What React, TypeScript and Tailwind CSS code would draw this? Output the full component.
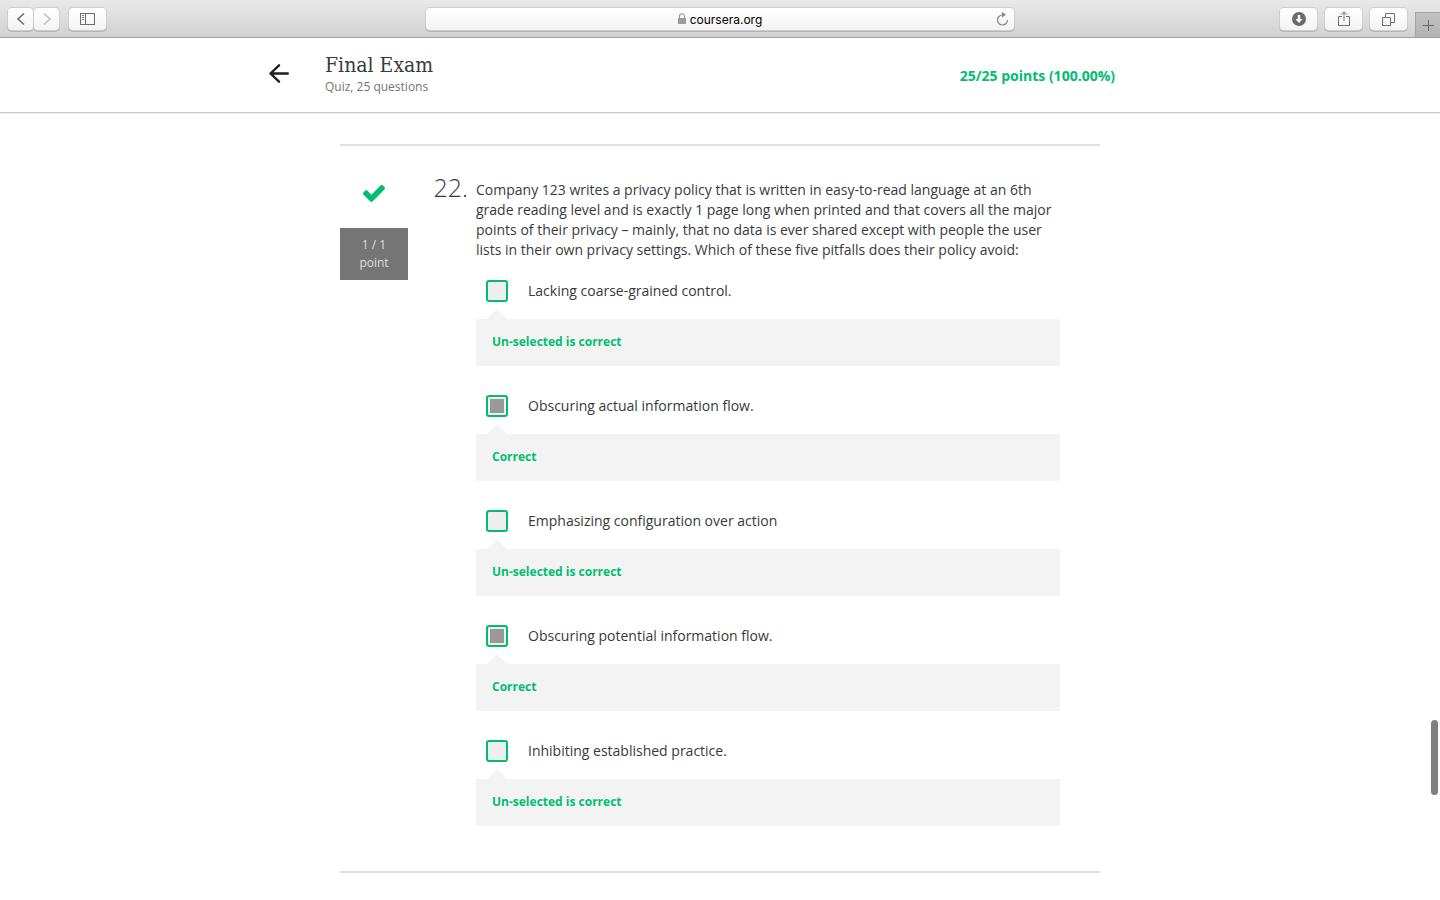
import React from "react";

type Option = { id: string; text: string; selected: boolean };

const OPTIONS: Option[] = [
  { id: "coarse", text: "Lacking coarse-grained control.", selected: false },
  { id: "actual", text: "Obscuring actual information flow.", selected: true },
  { id: "config", text: "Emphasizing configuration over action", selected: false },
  { id: "potential", text: "Obscuring potential information flow.", selected: true },
  { id: "practice", text: "Inhibiting established practice.", selected: false },
];

function ToolButton({ label, className, children }: { label: string; className: string; children: React.ReactNode }) {
  return (
    <button
      type="button"
      aria-label={label}
      className={`flex h-[22px] items-center justify-center rounded bg-linear-to-b from-white to-[#f3f3f3] shadow-[0_0_0_1px_#cfcfcf,0_1px_0_1px_#b4b4b4] ${className}`}
    >
      {children}
    </button>
  );
}

function BrowserBar() {
  return (
    <div className="grid h-[38px] grid-cols-[1fr_minmax(0,588px)_1fr] border-b border-[#9c9c9c] bg-linear-to-b from-[#e9e9e9] to-[#d1d1d1]">
      <div className="flex items-start pt-2 pl-2">
        <ToolButton label="Back" className="w-[25px]">
          <svg width="10" height="14" viewBox="0 0 10 14" fill="none" stroke="#6e6e6e" strokeWidth="1.6">
            <path d="M8 1.5 2 7l6 5.500" />
          </svg>
        </ToolButton>
        <ToolButton label="Forward" className="ml-px w-[25px]">
          <svg width="10" height="14" viewBox="0 0 10 14" fill="none" stroke="#bdbdbd" strokeWidth="1.6">
            <path d="M2 1.500 8 7l-6 5.500" />
          </svg>
        </ToolButton>
        <ToolButton label="Show sidebar" className="ml-[10px] w-[37px]">
          <svg width="15" height="12" viewBox="0 0 15 12" fill="none" stroke="#6e6e6e">
            <rect x=".5" y=".5" width="14" height="11" />
            <path d="M5.500 1v10M2 2.500h2M2 4.500h2M2 6.500h2" />
          </svg>
        </ToolButton>
      </div>
      <div className="pt-2">
        <div className="flex h-[22px] items-center rounded bg-linear-to-b from-white to-[#f2f2f2] pr-1 pl-5 shadow-[0_0_0_1px_#cfcfcf,0_1px_0_1px_#b4b4b4]">
          <div className="flex flex-1 items-center justify-center gap-1 text-[12px] leading-4 text-black">
            <svg width="8" height="12" viewBox="0 0 8 12">
              <rect y="5" width="8" height="6" rx=".5" fill="#9a9a9a" />
              <path d="M1.500 5V3.200a2.500 2.500 0 0 1 5 0V5" fill="none" stroke="#9a9a9a" strokeWidth="1.100" />
            </svg>
            <span className="pt-px font-['Inter',sans-serif]">coursera.org</span>
          </div>
          <button type="button" aria-label="Reload" className="flex w-4 justify-center">
            <svg width="13" height="14" viewBox="0 0 13 14" fill="none" stroke="#858585" strokeWidth="1.200">
              <path d="M6.500 3A5 5 0 1 0 11.500 8" />
              <path d="M6 0v5.600l4-2.800z" fill="#858585" stroke="none" />
            </svg>
          </button>
        </div>
      </div>
      <div className="flex items-start justify-end pt-2">
        <ToolButton label="Downloads" className="w-[37px]">
          <svg width="14" height="14" viewBox="0 0 14 14">
            <circle cx="7" cy="7" r="7" fill="#6b6b6b" />
            <path d="M5.800 3h2.400v4h2.300L7 11 3.500 7h2.300z" fill="#fff" />
          </svg>
        </ToolButton>
        <ToolButton label="Share" className="ml-2 w-[37px]">
          <svg width="12" height="16" viewBox="0 0 12 16" fill="none" stroke="#6e6e6e">
            <path d="M4 5.500H.5v9h11v-9H8M6 10V1M3 3.800 6 .8l3 3" />
          </svg>
        </ToolButton>
        <ToolButton label="Show all tabs" className="ml-2 w-[37px]">
          <svg width="13" height="13" viewBox="0 0 13 13" fill="none" stroke="#6e6e6e">
            <path d="M.5 4.500h8v8h-8zM3.500 4V.5h9v9H9" />
          </svg>
        </ToolButton>
        <button
          type="button"
          aria-label="New tab"
          className="mt-1 ml-2 flex h-[25px] w-[25px] items-center justify-center border-t border-l border-[#a3a3a3] bg-linear-to-b from-[#c2c2c2] to-[#b3b3b3]"
        >
          <svg width="11" height="11" viewBox="0 0 11 11" stroke="#6a6a6a">
            <path d="M5.500 0v11M0 5.500h11" />
          </svg>
        </button>
      </div>
    </div>
  );
}

function ExamHeader() {
  return (
    <header className="border-b border-[#c6c6c6] shadow-[0_1px_1px_#f0f0f0]">
      <div className="mx-auto flex h-[74px] max-w-[902px] items-center pr-14 pb-1">
        <a href="#back" aria-label="Back" className="mr-9 block w-5">
          <svg width="20" height="19" viewBox="0 0 20 19" fill="none" stroke="#1f1f1f" strokeWidth="2.400" strokeLinecap="round" strokeLinejoin="round">
            <path d="M10 1.300 1.500 9.500 10 17.700M1.500 9.500h17.300" />
          </svg>
        </a>
        <div className="flex-1">
          <h1 className="font-['DejaVu_Serif_Condensed','DejaVu_Serif',serif] text-[21px] leading-7 text-[#373a3c]">Final Exam</h1>
          <p className="text-[12px] leading-4 text-[#757575]">Quiz, 25 questions</p>
        </div>
        <p className="pt-[6px] text-[14px] leading-5 font-bold text-[#00bd70]">25/25 points (100.00%)</p>
      </div>
    </header>
  );
}

function Answer({ option }: { option: Option }) {
  return (
    <li>
      <div className="flex items-center gap-5 pl-[10px]">
        <input
          id={option.id}
          type="checkbox"
          defaultChecked={option.selected}
          className="size-[22px] shrink-0 appearance-none rounded-[3px] border-2 border-[#00bd70] bg-[#eeeeee] checked:bg-[#999999] checked:shadow-[inset_0_0_0_2px_#f0f0f0]"
        />
        <label htmlFor={option.id} className="text-[14px] leading-5 text-[#373a3c]">
          {option.text}
        </label>
      </div>
      <svg className="mt-[7px] ml-[11px] block" width="20" height="10" viewBox="0 0 20 10">
        <path d="M0 10 10 0l10 10z" fill="#f3f3f3" />
      </svg>
      <div className="bg-[#f3f3f3] px-4 pt-[14px] pb-[15px] text-[12px] leading-[18px] font-bold text-[#00bd70]">
        {option.selected ? "Correct" : "Un-selected is correct"}
      </div>
    </li>
  );
}

export default function App() {
  return (
    <div className="relative min-h-screen bg-white font-['Open_Sans',sans-serif]">
      <BrowserBar />
      <ExamHeader />
      <main className="mx-auto mt-[31px] max-w-[760px] border-y-2 border-[#dfdfdf] pt-[34px] pr-10 pb-[45px]">
        <div className="flex items-start">
          <div className="w-[68px] shrink-0">
            <svg className="mx-auto mt-1 block" width="22" height="18" viewBox="121 270 1550 1252" preserveAspectRatio="none">
              <path
                fill="#00bd70"
                d="M1671 566q0 40-28 68l-724 724-136 136q-28 28-68 28t-68-28l-136-136-362-362q-28-28-28-68t28-68l136-136q28-28 68-28t68 28l294 295 656-657q28-28 68-28t68 28l136 136q28 28 28 68z"
              />
            </svg>
            <div className="mt-[26px] bg-[#757575] py-2 text-center text-[12px] leading-[18px] text-[#dedede]">
              <div>1 / 1</div>
              <div>point</div>
            </div>
          </div>
          <div className="-mt-[9px] w-[68px] shrink-0 pr-2 text-right text-[25px] leading-8 font-light text-[#373a3c]">22.</div>
          <div className="min-w-0 flex-1">
            <p className="text-[14px] leading-5 text-[#373a3c]">
              Company 123 writes a privacy policy that is written in easy-to-read language at an 6th grade reading level and is exactly 1 page
              long when printed and that covers all the major points of their privacy – mainly, that no data is ever shared except with people
              the user lists in their own privacy settings. Which of these five pitfalls does their policy avoid:
            </p>
            <ul className="mt-5 flex flex-col gap-[29px]">
              {OPTIONS.map((option) => (
                <Answer key={option.id} option={option} />
              ))}
            </ul>
          </div>
        </div>
      </main>
      <div className="absolute top-[720px] right-[2px] h-[75px] w-[7px] rounded-full bg-[#808080]" />
    </div>
  );
}
